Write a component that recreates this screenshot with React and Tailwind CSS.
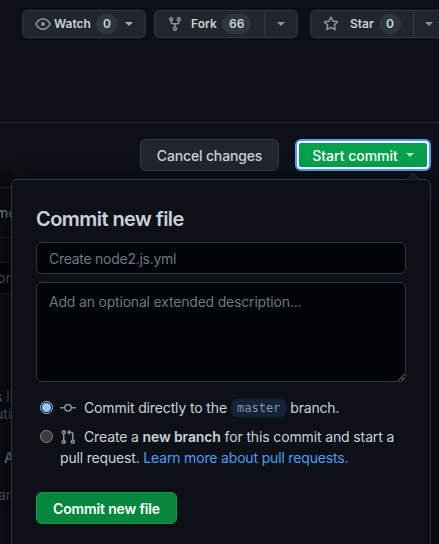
import clsx from 'clsx';

const EyeIcon = () => (
  <svg viewBox="0 0 16 16" className="h-4 w-4 shrink-0 fill-[#8b949e]">
    <path fillRule="evenodd" d="M1.679 7.932c.412-.621 1.242-1.75 2.366-2.717C5.175 4.242 6.527 3.5 8 3.5c1.473 0 2.824.742 3.955 1.715 1.124.967 1.954 2.096 2.366 2.717a.119.119 0 010 .136c-.412.621-1.242 1.75-2.366 2.717C10.825 11.758 9.473 12.5 8 12.5c-1.473 0-2.824-.742-3.955-1.715C2.92 9.818 2.09 8.69 1.679 8.068a.119.119 0 010-.136zM8 2c-1.981 0-3.67.992-4.933 2.078C1.797 5.169.88 6.423.43 7.1a1.619 1.619 0 000 1.798c.45.678 1.367 1.932 2.637 3.024C4.329 13.008 6.019 14 8 14c1.981 0 3.67-.992 4.933-2.078 1.27-1.091 2.187-2.345 2.637-3.023a1.619 1.619 0 000-1.798c-.45-.678-1.367-1.932-2.637-3.023C11.671 2.992 9.981 2 8 2zm0 8a2 2 0 100-4 2 2 0 000 4z" />
  </svg>
);

const ForkIcon = () => (
  <svg viewBox="0 0 16 16" className="h-4 w-4 shrink-0 fill-[#8b949e]">
    <path fillRule="evenodd" d="M5 3.25a.75.75 0 11-1.5 0 .75.75 0 011.5 0zm0 2.122a2.25 2.25 0 10-1.5 0v.878A2.25 2.25 0 005.75 8.5h1.5v2.128a2.251 2.251 0 101.5 0V8.5h1.5a2.25 2.25 0 002.25-2.25v-.878a2.25 2.25 0 10-1.5 0v.878a.75.75 0 01-.75.75h-4.5A.75.75 0 015 6.25v-.878zm3.75 7.378a.75.75 0 11-1.5 0 .75.75 0 011.5 0zm3-8.75a.75.75 0 100-1.5.75.75 0 000 1.5z" />
  </svg>
);

const StarIcon = () => (
  <svg viewBox="0 0 16 16" className="h-4 w-4 shrink-0 fill-[#8b949e]">
    <path fillRule="evenodd" d="M8 .25a.75.75 0 01.673.418l1.882 3.815 4.21.612a.75.75 0 01.416 1.279l-3.046 2.97.719 4.192a.75.75 0 01-1.088.791L8 12.347l-3.766 1.98a.75.75 0 01-1.088-.79l.72-4.194L.818 6.374a.75.75 0 01.416-1.28l4.21-.611L7.327.668A.75.75 0 018 .25zm0 2.445L6.615 5.5a.75.75 0 01-.564.41l-3.097.45 2.24 2.184a.75.75 0 01.216.664l-.528 3.084 2.769-1.456a.75.75 0 01.698 0l2.77 1.456-.53-3.084a.75.75 0 01.216-.664l2.24-2.183-3.096-.45a.75.75 0 01-.564-.41L8 2.694v.001z" />
  </svg>
);

const CommitIcon = () => (
  <svg viewBox="0 0 16 16" className="h-4 w-4 shrink-0 fill-[#8b949e]">
    <path fillRule="evenodd" d="M10.5 7.75a2.5 2.5 0 11-5 0 2.5 2.5 0 015 0zm1.43.75a4.002 4.002 0 01-7.86 0H.75a.75.75 0 110-1.5h3.32a4.001 4.001 0 017.86 0h3.32a.75.75 0 110 1.5h-3.32z" />
  </svg>
);

const PullRequestIcon = () => (
  <svg viewBox="0 0 16 16" className="h-4 w-4 shrink-0 fill-[#8b949e]">
    <path fillRule="evenodd" d="M7.177 3.073L9.573.677A.25.25 0 0110 .854v4.792a.25.25 0 01-.427.177L7.177 3.427a.25.25 0 010-.354zM3.75 2.5a.75.75 0 100 1.5.75.75 0 000-1.5zm-2.25.75a2.25 2.25 0 113 2.122v5.256a2.251 2.251 0 11-1.5 0V5.372A2.25 2.25 0 011.5 3.25zM11 2.5h-1V4h1a1 1 0 011 1v5.628a2.251 2.251 0 101.5 0V5A2.5 2.5 0 0011 2.5zm1 10.25a.75.75 0 111.5 0 .75.75 0 01-1.5 0zM3.75 12a.75.75 0 100 1.5.75.75 0 000-1.5z" />
  </svg>
);

const Caret = ({ className }) => (
  <span className={clsx('inline-block h-0 w-0 border-x-4 border-t-4 border-x-transparent', className)} />
);

const Counter = ({ children }) => (
  <span className="flex h-5 items-center rounded-full bg-[#30363d] px-[7px] text-[12px] font-semibold">{children}</span>
);

const Radio = ({ checked }) => (
  <span
    className={clsx(
      'flex h-[13px] w-[13px] shrink-0 items-center justify-center rounded-full border',
      checked ? 'border-[#99c8ff] bg-[#0d1117]' : 'border-[#858585] bg-[#3b3b3b]'
    )}
  >
    {checked && <span className="h-[9px] w-[9px] rounded-full bg-[#99c8ff]" />}
  </span>
);

const RepoActions = () => (
  <div className="flex w-[500px] pl-[22px] pt-[10px] text-[12px] font-semibold text-[#c9d1d9]">
    <div className="flex h-7 w-[124px] items-center rounded-md border border-[#363b42] bg-[#21262d] pl-3">
      <EyeIcon />
      <span className="ml-[3px] w-[37px]">Watch</span>
      <span className="ml-[5px]"><Counter>0</Counter></span>
      <Caret className="ml-[7px] border-t-[#a6adb5]" />
    </div>
    <div className="ml-2 flex h-7 w-[144px] items-center rounded-md border border-[#363b42] bg-[#21262d] pl-3">
      <ForkIcon />
      <span className="ml-2 w-[26px]">Fork</span>
      <span className="ml-[5px] w-[42px]"><span className="inline-flex"><Counter>66</Counter></span></span>
      <span className="flex h-full flex-1 items-center justify-center border-l border-[#363b42]">
        <Caret className="border-t-[#8b949e]" />
      </span>
    </div>
    <div className="ml-3 flex h-7 w-[138px] items-center rounded-md border border-[#363b42] bg-[#21262d] pl-3">
      <StarIcon />
      <span className="ml-[11px] w-[24px]">Star</span>
      <span className="ml-[5px] w-[34px]"><span className="inline-flex"><Counter>0</Counter></span></span>
      <span className="flex h-full flex-1 items-center border-l border-[#363b42] pl-[11px]">
        <Caret className="border-t-[#8b949e]" />
      </span>
    </div>
  </div>
);

// Editor page showing through on the left of the popover
const PageBehind = () => (
  <div className="w-[12px] overflow-hidden whitespace-nowrap bg-[#0a0d12] text-[14px] leading-5 text-[#5c636b]">
    <div className="mt-[16px] h-[51px] border-y border-[#21262d] pt-[15px] text-[#9299a1]">
      <span className="-ml-[4px]">me</span>
    </div>
    <div className="mt-[24px] h-[32px] border-y border-[#21262d] bg-[#020409] pt-[5px]">
      <span className="-ml-[3px]">or</span>
    </div>
    <div className="pt-[94px] text-[14px] leading-[17px]">
      <div className="-ml-[5px]">s li</div>
      <div className="-ml-[5px]">uti</div>
    </div>
    <div className="ml-[4px] mt-[26px] font-semibold text-[#7d848d]">Actions</div>
    <div className="-ml-[2px] mt-[17px]">ar</div>
  </div>
);

const CommitPopover = () => (
  <div className="absolute left-[11px] top-[179px] h-[380px] w-[420px] rounded-md border border-[#30363d] bg-[#0d1117] px-6 pt-6 text-[14px] text-[#c9d1d9] shadow-[0_8px_24px_#010409]">
    <svg viewBox="0 0 16 8" className="absolute -top-[8px] right-[9px] h-2 w-4">
      <path d="M1 8L8 1l7 7z" fill="#161b22" stroke="#30363d" strokeWidth="0.7" />
    </svg>
    <h3 className="text-[20px] font-semibold leading-[30px] tracking-[-0.55px]">Commit new file</h3>
    <div className="mt-2 flex h-8 w-[370px] items-center rounded-md border border-[#30363d] bg-[#010409] px-3 tracking-[-0.27px] text-[#6e7681]">
      Create node2.js.yml
    </div>
    <div className="relative mt-2 h-[100px] w-[370px] rounded-md border border-[#30363d] bg-[#010409] px-3 pt-[9px] leading-5 tracking-[-0.19px] text-[#6e7681]">
      Add an optional extended description...
      <svg viewBox="0 0 7 7" className="absolute bottom-0 right-0 h-[7px] w-[7px]" stroke="#a5a5a5" strokeWidth="0.8">
        <path d="M0.5 6.5l6-6M3.5 6.5l3-3" />
      </svg>
    </div>
    <div className="mt-[15px] flex h-[21px] items-center whitespace-nowrap pl-[4px] tracking-[-0.13px]">
      <Radio checked />
      <span className="ml-[7px] flex"><CommitIcon /></span>
      <span className="ml-2">Commit directly to the</span>
      <span className="ml-[4px] h-[18px] rounded-md bg-[#12233a] px-[6px] font-['DejaVu_Sans_Mono',monospace] text-[12px] leading-[18px] tracking-normal text-[#8b949e]">master</span>
      <span className="ml-[4px] tracking-[-0.2px]">branch.</span>
    </div>
    <div className="mt-[8px] flex whitespace-nowrap pl-[4px] leading-[21px]">
      <span className="flex h-[21px] items-center"><Radio /></span>
      <div className="ml-[7px]">
        <div className="flex items-center">
          <PullRequestIcon />
          <span className="ml-2 tracking-[-0.13px]">Create a <b className="font-semibold">new branch</b> for this commit and start a</span>
        </div>
        <div className="tracking-[-0.17px]">pull request. <a className="text-[#4b9ff5]">Learn more about pull requests.</a></div>
      </div>
    </div>
    <button className="mt-[24px] flex h-8 w-[141px] items-center justify-center rounded-md border border-[#1c924c] bg-[#05883e] font-semibold tracking-[-0.15px] text-white">
      Commit new file
    </button>
  </div>
);

export default function App() {
  return (
    <div className="relative h-[544px] w-[439px] overflow-hidden bg-[#0d1117] font-['Inter',sans-serif]">
      <RepoActions />
      <div className="mt-[84px] flex border-t border-[#21262d] pl-[140px] pt-[16px] text-[14px] font-medium">
        <button className="flex h-8 w-[139px] items-center justify-center rounded-md border border-[#363b42] bg-[#21262d] tracking-[-0.15px] text-[#c9d1d9]">
          Cancel changes
        </button>
        <button className="ml-4 flex h-8 w-[136px] items-center rounded-md border-2 border-[#4b9ff5] bg-white p-[2px] text-white">
          <span className="flex h-full flex-1 items-center justify-center gap-2 rounded-[2px] bg-[#05a04b]">
            Start commit
            <Caret className="border-t-[#b4e2c8]" />
          </span>
        </button>
      </div>
      <PageBehind />
      <CommitPopover />
    </div>
  );
}
